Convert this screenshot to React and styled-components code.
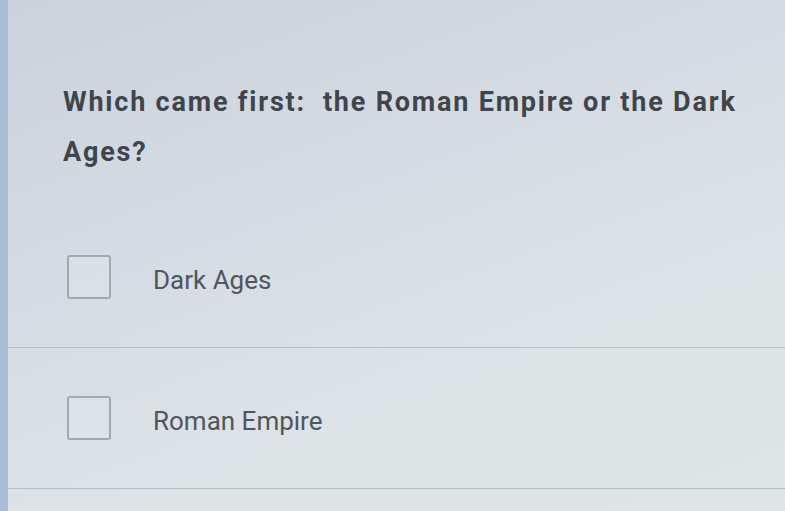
import React, { useState } from 'react';
import styled, { createGlobalStyle } from 'styled-components';

const GlobalStyle = createGlobalStyle`
  html, body {
    margin: 0;
    padding: 0;
  }
  body {
    font-family: Roboto, "Liberation Sans", sans-serif;
    overflow: hidden;
  }
`;

const Page = styled.div`
  width: 785px;
  height: 511px;
  box-sizing: border-box;
  border-left: 8px solid #a9bfd8;
  background: linear-gradient(160deg, #ccd2dc 0%, #d6dce3 40%, #dde3e6 70%, #dfe4e4 100%);
  padding-top: 77px;
`;

const Question = styled.h1`
  margin: 0 0 30px 55px;
  width: 700px;
  font-size: 27px;
  font-weight: 700;
  line-height: 50px;
  color: #40454c;
  letter-spacing: 1.8px;
`;

const OptionList = styled.div`
  display: flex;
  flex-direction: column;
`;

const OptionRow = styled.label`
  display: flex;
  align-items: center;
  gap: 42px;
  height: 140px;
  padding-left: 59px;
  border-bottom: 1.5px solid #b9bec3;
  cursor: pointer;
`;

const Box = styled.span`
  width: 44px;
  height: 44px;
  box-sizing: border-box;
  border: 2px solid #a3a9b0;
  border-radius: 3px;
  background: ${props => (props.checked ? '#8a9aae' : 'rgba(255,255,255,0.12)')};
  flex-shrink: 0;
`;

const OptionText = styled.span`
  font-size: 26px;
  color: #50565d;
  padding-top: 6px;
`;

const options = ['Dark Ages', 'Roman Empire'];

const App = () => {
  const [selected, setSelected] = useState(null);

  return (
    <Page>
      <GlobalStyle />
      <Question>Which came first:&nbsp; the Roman Empire or the Dark Ages?</Question>
      <OptionList>
        {options.map(opt => (
          <OptionRow key={opt} onClick={() => setSelected(opt)}>
            <Box checked={selected === opt} />
            <OptionText>{opt}</OptionText>
          </OptionRow>
        ))}
      </OptionList>
    </Page>
  );
};

export default App;
